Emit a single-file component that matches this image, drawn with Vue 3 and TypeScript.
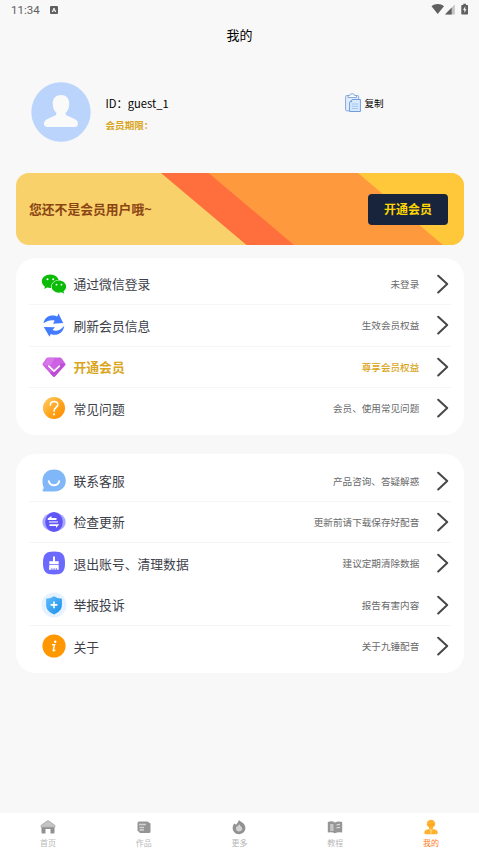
<script setup lang="ts">
interface MenuRow {
  icon: string
  label: string
  note: string
  gold?: boolean
  plain?: boolean
}

const groups: MenuRow[][] = [
  [
    { icon: 'wechat', label: '通过微信登录', note: '未登录' },
    { icon: 'refresh', label: '刷新会员信息', note: '生效会员权益' },
    { icon: 'gem', label: '开通会员', note: '尊享会员权益', gold: true },
    { icon: 'question', label: '常见问题', note: '会员、使用常见问题', plain: true },
  ],
  [
    { icon: 'service', label: '联系客服', note: '产品咨询、答疑解惑' },
    { icon: 'update', label: '检查更新', note: '更新前请下载保存好配音' },
    { icon: 'clean', label: '退出账号、清理数据', note: '建议定期清除数据', plain: true },
    { icon: 'report', label: '举报投诉', note: '报告有害内容' },
    { icon: 'about', label: '关于', note: '关于九锤配音', plain: true },
  ],
]

const tabs = [
  { icon: 'home', label: '首页' },
  { icon: 'works', label: '作品' },
  { icon: 'more', label: '更多' },
  { icon: 'guide', label: '教程' },
  { icon: 'mine', label: '我的' },
]
const activeTab = 'mine'
</script>

<template>
  <div class="page">
    <header class="status">
      <span class="clock">11:34</span>
      <svg class="badge" viewBox="0 0 8 8"><rect width="8" height="8" rx="1" fill="#606060" /><path d="M2.200 6.100 4 2l1.800 4.100M2.900 4.800h2.200" fill="none" stroke="#f8f8f8" stroke-width="1" /></svg>
      <svg class="signals" viewBox="0 0 38 12">
        <path d="M.5 3.200C4 .200 9.500.200 13 3.200L6.700 11z" fill="#606060" />
        <path d="M14 11.500 23.800 1.500v10z" fill="#c4c4c4" />
        <path d="M14 11.500 20.700 4.600v6.900z" fill="#606060" />
        <path d="M31 1.900h1.300V.8h2.600v1.100h1.400q.7 0 .7.700v8.200q0 .7-.7.700h-5.300q-.7 0-.7-.7V2.600q0-.7.7-.7z" fill="#606060" />
        <path d="M34.300 3.300 32 6.900h1.400V9.900L35.500 6.300h-1.300z" fill="#f8f8f8" />
      </svg>
    </header>
    <h1 class="title">我的</h1>

    <section class="profile">
      <svg class="avatar" viewBox="0 0 60 60">
        <circle cx="30" cy="30" r="29.700" fill="#bbd4fb" />
        <path d="M30 13c5 0 8.300 3.400 8.300 8.500 0 4.500-1.600 7.500-3.600 9.300-.5 1.600.4 2.500 2.300 3.300l5.500 2.300c3.200 1.400 4.500 2.800 4.500 5.300 0 2.200-1.400 3.300-3.500 3.300h-27c-2.100 0-3.500-1.100-3.500-3.300 0-2.500 1.300-3.900 4.500-5.300l5.500-2.300c1.900-.8 2.800-1.700 2.300-3.300-2-1.800-3.600-4.800-3.600-9.300C21.700 16.400 25 13 30 13z" fill="#fafafa" />
      </svg>
      <div class="who">
        <div class="uid">ID：guest_1</div>
        <div class="expiry">会员期限：</div>
      </div>
      <div class="copy">
        <svg viewBox="0 0 16 19">
          <rect x=".6" y="2.500" width="13" height="15.300" rx="1" fill="#e1edfa" stroke="#87a9dc" />
          <path d="M3 4.500h8.500V2.500H9.700Q9.500.7 7.200.7T4.700 2.500H3z" fill="#f7faff" stroke="#7fa2d5" stroke-width=".9" />
          <path d="M7.200 6.500h8.200v12H4.600V9.200z" fill="#d8eaff" stroke="#6f9be0" />
          <path d="M7.200 6.500v2.700H4.600z" fill="#7ea7e7" />
          <path d="M6.800 11h6.400M6.800 13.300h6.400M6.800 15.600h6.400" stroke="#a3c3f0" />
        </svg>
        <span>复制</span>
      </div>
    </section>

    <section class="banner">
      <svg class="stripes" viewBox="0 0 448 72" preserveAspectRatio="none">
        <path d="M0 0h448v72H0z" fill="#f8d16b" />
        <path d="M145 0h60l85 72h-59.500z" fill="#ff6f3d" />
        <path d="M192.500 0h155l85 72H278z" fill="#ff993d" />
        <path d="M342 0h106v72h-21z" fill="#ffc83b" />
      </svg>
      <span class="pitch">您还不是会员用户哦~</span>
      <button class="join">开通会员</button>
    </section>

    <main>
      <section v-for="(rows, g) in groups" :key="g" class="card">
        <div v-for="row in rows" :key="row.label" class="row" :class="{ gold: row.gold, plain: row.plain }">
          <svg class="icon" viewBox="0 0 26 26">
            <g v-if="row.icon === 'wechat'">
              <path d="M9.300 3.500C4.500 3.500.8 6.500.8 10.300c0 2.200 1.200 4 3.100 5.300l-.7 2.500 2.900-1.500c1 .3 2.100.5 3.300.5 4.600 0 8.400-3 8.400-6.800s-3.800-6.800-8.500-6.800z" fill="#0abb07" />
              <ellipse cx="17.900" cy="15.700" rx="8" ry="6.700" fill="#fff" />
              <path d="M17.900 9.500c-4.100 0-7.300 2.700-7.300 6.100s3.200 6.100 7.300 6.100c.9 0 1.800-.1 2.600-.4l2.700 1.500-.7-2.400c1.600-1.100 2.600-2.800 2.600-4.800 0-3.400-3.200-6.100-7.200-6.100z" fill="#0abb07" />
              <g fill="#fff"><circle cx="6.500" cy="8.300" r="1" /><circle cx="12.200" cy="8.300" r="1" /><circle cx="15.500" cy="13.700" r=".9" /><circle cx="20.500" cy="13.700" r=".9" /></g>
            </g>
            <g v-else-if="row.icon === 'refresh'" fill="#427bff">
              <path d="M2.500 11.300C3.500 5 9.300 2.400 15 4l1.300.4 1.200-2.900 4.700 9.400-10.200.8 1.700-3C10.500 7.500 6.500 8.500 2.500 11.300z" />
              <path d="M23.300 13.700C22.600 20.500 16.500 24 11 22.500l-1.300-.4-1.200 2.700L2.800 15l11.200.2-2.500 2.900c4.200 1.600 8.600-.3 11.800-4.400z" />
            </g>
            <g v-else-if="row.icon === 'gem'">
              <path d="M7 3.500h12q1 0 1.600.8l3.700 5.200q.7 1-.2 2L14.200 22.200q-1.200 1.100-2.400 0L2 11.500q-.9-1-.2-2l3.600-5.200Q6 3.500 7 3.500z" fill="#cc62e2" />
              <path d="m2 11.500 5-8h7L10 11z" fill="#df8af0" opacity=".5" />
              <path d="m24.300 10-10.100 12.200q-1.200 1.100-2.400 0L9 19.200 20 9.500z" fill="#b944d2" opacity=".75" />
              <path d="m7.800 12.100 5.200 5.100 5.400-5.100" fill="none" stroke="#fff" stroke-width="1.700" stroke-linecap="round" stroke-linejoin="round" />
            </g>
            <g v-else-if="row.icon === 'question'">
              <defs><linearGradient id="amber" x1="0" y1="0" x2="1" y2="1"><stop stop-color="#ffd06b" /><stop offset=".55" stop-color="#ffa31b" /><stop offset="1" stop-color="#ff8c00" /></linearGradient></defs>
              <circle cx="13" cy="13" r="11" fill="url(#amber)" />
              <path d="M9.300 10.200q0-3.700 3.700-3.700t3.800 3.200q0 1.500-1.800 2.800-2 1.400-2 3.700" fill="none" stroke="#fff" stroke-width="1.600" stroke-linecap="round" />
              <circle cx="13" cy="19.300" r="1.100" fill="#fff" />
            </g>
            <g v-else-if="row.icon === 'service'">
              <path d="M13 1.500c7 0 11.800 4.700 11.800 11.200S20 23.500 13 23.500H2.700c-1.300 0-1.500-.8-.8-1.900l1-1.700C2 18 1.500 16 1.500 12.700 1.500 6.200 6 1.500 13 1.500z" fill="#80b7f8" />
              <path d="M7.800 13.200c1.600 5.300 8.800 5.300 10.400 0" fill="none" stroke="#fff" stroke-width="2" stroke-linecap="round" />
            </g>
            <g v-else-if="row.icon === 'update'">
              <ellipse cx="13" cy="13" rx="11.600" ry="9.600" fill="#aaa9ff" />
              <ellipse cx="13" cy="13" rx="8.800" ry="9.900" fill="#6055f5" />
              <path d="M6.700 9.500 10.500 7v2h5v2H6.700zM8 12.400h9v1.100H8zM18.300 15.300 15 19v-2H8.500v-1.700z" fill="#fff" />
            </g>
            <g v-else-if="row.icon === 'clean'">
              <path d="M13 1.500c8.300 0 11 2.800 11 11.500S21.300 24.500 13 24.500 2 21.700 2 13 4.700 1.500 13 1.500z" fill="#6c69ff" />
              <path d="M12 6.700q1-1 2 0v4.600h3.700v3H8.300v-3H12zM8.300 15h9.400v4.800h-1.900v-1.500h-1v1.500h-1.200v-1.500h-1v1.500h-1.200v-1.500h-1v1.500H8z" fill="#fff" />
            </g>
            <g v-else-if="row.icon === 'report'">
              <defs><linearGradient id="shield" x1="0" y1="0" x2="1" y2="1"><stop stop-color="#63bdf9" /><stop offset="1" stop-color="#168fec" /></linearGradient></defs>
              <circle cx="13" cy="13" r="12.500" fill="#e6f2ff" />
              <path d="M13 4.200q3 2.300 7.900 2.500V13c0 4.500-3.100 7.200-7.900 9.500-4.800-2.300-7.900-5-7.900-9.500V6.700Q10 6.500 13 4.200z" fill="url(#shield)" />
              <path d="M13 9.500v6.800M9.600 12.900h6.800" stroke="#fff" stroke-width="1.600" />
            </g>
            <g v-else>
              <circle cx="13" cy="13" r="11.600" fill="#ff9800" />
              <circle cx="14.200" cy="8.700" r="1.200" fill="#fff" />
              <path d="M11 11.800h2.600L12.300 16.800q-.3 1.300.8.900l1.200-.9" fill="none" stroke="#fff" stroke-width="1.400" />
            </g>
          </svg>
          <span class="label">{{ row.label }}</span>
          <span class="note">{{ row.note }}</span>
          <svg class="chevron" viewBox="0 0 12 20"><path d="m1.200 1.700 9 8.400-9 8.400" fill="none" stroke="#474747" stroke-width="2" stroke-linecap="round" stroke-linejoin="round" /></svg>
        </div>
      </section>
    </main>

    <nav class="tabs">
      <div v-for="tab in tabs" :key="tab.icon" class="tab" :class="{ active: tab.icon === activeTab }">
        <svg viewBox="0 0 16 16">
          <g v-if="tab.icon === 'home'">
            <path d="M1.500 7h13v6.500q0 1-1 1h-3V10h-5v4.500h-3q-1 0-1-1z" fill="#919191" />
            <path d="m1.200 6.300 6-4.300q.8-.6 1.600 0l6 4.300v2H1.200z" fill="#c4c4c4" stroke="#a2a2a2" stroke-width=".8" />
          </g>
          <g v-else-if="tab.icon === 'works'">
            <path d="M3 2.500h8.500L14.500 4.500v8q0 1.500-1.500 1.500H4L1.500 11.500V4Q1.500 2.500 3 2.500z" fill="#959595" />
            <path d="M3 5.500h7M3.500 8.500h4.500M3.500 11h4.500" stroke="#d2d2d2" stroke-width="1.300" />
          </g>
          <g v-else-if="tab.icon === 'more'">
            <path d="M8 .8c.2 1.700 3 2 4.500 3.700 4 4.300 1.300 10.700-4.500 10.700S-.3 9 3.300 4.500l1.800 1.300Q7.500 3.500 8 .8z" fill="#929292" />
            <path d="M8.300 5c-.5 1.800-3.300 2.300-3.300 4.500 0 1.800 1.300 3 3 3s3.300-1.200 3.300-3C11.300 8 9 7.300 8.300 5z" fill="#d2d2d2" />
          </g>
          <g v-else-if="tab.icon === 'guide'">
            <path d="M.8 3q4.200-1.500 7.200.5 3-1.500 7.200-.5v10.500q-4.200-1-7.200.7-3-1.700-7.200-.7z" fill="#969696" />
            <path d="M3.200 5h3.300v7H3.200z" fill="#c7c7c7" />
            <path d="m9.500 6 3.500-.7M9.500 9l3.500-.7" stroke="#e5e5e5" stroke-width="1.100" />
          </g>
          <g v-else>
            <circle cx="8" cy="4.900" r="4.200" fill="#ffb12e" />
            <path d="M6 8h4v2l3.200 1q1.500.6 1.500 2.600 0 1.600-1.200 1.600h-11q-1.200 0-1.200-1.600 0-2 1.500-2.600L6 10z" fill="#ffb12e" />
            <path d="M5.200 5.500q2.800 1.200 5.600 0" fill="none" stroke="#ff9d18" stroke-width=".9" />
            <path d="m6.200 10 1.800 1.300 1.800-1.300M8 11.300v3.400" fill="none" stroke="#ffe39b" stroke-width=".9" />
          </g>
        </svg>
        <span>{{ tab.label }}</span>
      </div>
    </nav>
  </div>
</template>

<style>
body { background: #f8f8f8; }
</style>

<style scoped>
.page {
  box-sizing: border-box;
  width: 100%;
  height: 853px;
  display: flex;
  flex-direction: column;
  overflow: hidden;
  background: #f8f8f8;
  font-family: "Noto Sans CJK SC", sans-serif;
  color: #000;
}
.status {
  height: 20px;
  flex: none;
  display: flex;
  align-items: center;
  padding: 0 10.500px 0 11px;
}
.clock { font: 11.500px/20px Roboto, sans-serif; color: #606060; }
.badge { width: 8px; height: 8px; margin-left: 10.500px; }
.signals { width: 38px; height: 12px; margin-left: auto; margin-bottom: 2px; }
.title { margin: 0; height: 32px; font-size: 13px; font-weight: 400; line-height: 30px; text-align: center; flex: none; }
.profile {
  height: 60px;
  flex: none;
  display: flex;
  align-items: center;
  margin: 30px 16px 31px 31px;
}
.avatar { width: 60px; height: 60px; margin-left: -.5px; }
.who { width: 239.500px; margin-left: 15px; }
.uid { font-size: 11.200px; line-height: 20px; margin-top: 3px; }
.expiry { font-size: 9.600px; line-height: 18px; margin-top: 3.500px; font-weight: 700; color: #daa520; }
.copy { display: flex; align-items: center; gap: 3.500px; font-size: 9.600px; margin-bottom: 19px; }
.copy svg { width: 16px; height: 19px; }
.banner {
  position: relative;
  height: 72px;
  flex: none;
  display: flex;
  align-items: center;
  justify-content: space-between;
  margin: 0 15px 0 16px;
  padding: 0 16px 0 13px;
  border-radius: 13px;
  overflow: hidden;
}
.stripes { position: absolute; inset: 0; width: 100%; height: 100%; }
.pitch { position: relative; font-size: 12.800px; font-weight: 700; padding-bottom: 2px; color: #8b4513; }
.join {
  position: relative;
  width: 80px;
  height: 31px;
  padding: 0 0 1px;
  border: 0;
  border-radius: 4px;
  background: #18233c;
  color: #ffd700;
  font: 700 12px "Noto Sans CJK SC", sans-serif;
}
main { display: flex; flex-direction: column; gap: 19px; margin: 13px 15px 0 16px; }
.card { padding: 5.800px 13px; border-radius: 20px; background: #fff; }
.card + .card { padding: 6.200px 13px 5.600px; }
.row {
  box-sizing: border-box;
  height: 41.400px;
  display: flex;
  align-items: center;
  padding: 0 2.500px 0 12px;
  border-bottom: 1px solid #f6f6f6;
}
.row.plain { border-color: transparent; }
.icon { width: 26px; height: 26px; flex: none; }
.label { margin-left: 6.500px; font-size: 12.800px; color: #3d414a; }
.note { margin-left: auto; font-size: 9.600px; color: #6a6a6a; }
.chevron { width: 12px; height: 20px; margin-left: 17.200px; flex: none; }
.gold .label { font-weight: 700; color: #daa520; }
.gold .note { font-weight: 500; color: #daa520; }
.tabs { display: flex; height: 40px; flex: none; margin-top: auto; background: #fff; }
.tab { flex: 1; display: flex; flex-direction: column; align-items: center; padding-top: 6px; font-size: 8px; line-height: 12px; color: #b8b8b8; }
.tab svg { width: 16px; height: 16px; margin-bottom: 2px; }
.tab.active { color: #ff7a22; }
</style>
